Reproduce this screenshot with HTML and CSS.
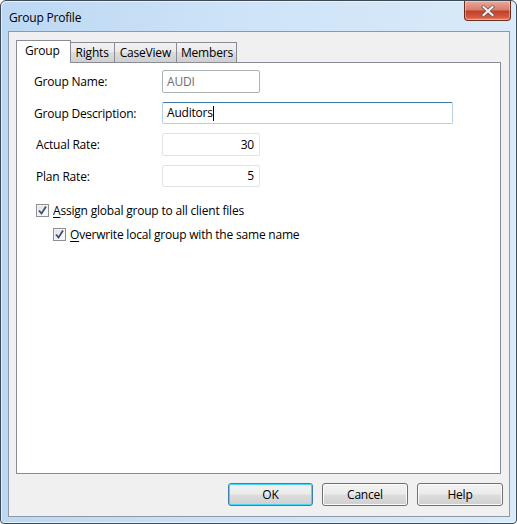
FILE: index.html
```html
<!DOCTYPE html>
<html>
<head>
<meta charset="utf-8">
<link rel="stylesheet" href="styles.css">
</head>
<body>
<div class="window">
  <div class="titlebar">
    <span class="title">Group Profile</span>
    <div class="close">
      <svg width="16" height="12" viewBox="0 0 16 12">
        <path d="M3.5 2 L12.5 10 M12.5 2 L3.5 10" stroke="#6b5a58" stroke-width="3.6" stroke-linecap="square"/>
        <path d="M3.5 2 L12.5 10 M12.5 2 L3.5 10" stroke="#f4f4f4" stroke-width="2" stroke-linecap="square"/>
      </svg>
    </div>
  </div>
  <div class="client">
    <div class="tabs">
      <div class="tab active">Group</div>
      <div class="tab">Rights</div>
      <div class="tab">CaseView</div>
      <div class="tab members">Members</div>
    </div>
    <div class="panel">
      <div class="row r1">
        <span class="label">Group Name:</span>
        <div class="input disabled short">AUDI</div>
      </div>
      <div class="row r2">
        <span class="label">Group Description:</span>
        <div class="input focused long">Auditors<span class="caret"></span></div>
      </div>
      <div class="row r3">
        <span class="label indent">Actual Rate:</span>
        <div class="input light short num">30</div>
      </div>
      <div class="row r4">
        <span class="label indent">Plan Rate:</span>
        <div class="input light short num">5</div>
      </div>
      <div class="check c1">
        <span class="box"><svg width="11" height="11" viewBox="0 0 11 11"><path d="M2 5.5 L4.5 8.5 L9 1.5" fill="none" stroke="#3b4f7a" stroke-width="1.8"/></svg></span>
        <span><u>A</u>ssign global group to all client files</span>
      </div>
      <div class="check c2">
        <span class="box"><svg width="11" height="11" viewBox="0 0 11 11"><path d="M2 5.5 L4.5 8.5 L9 1.5" fill="none" stroke="#3b4f7a" stroke-width="1.8"/></svg></span>
        <span><u>O</u>verwrite local group with the same name</span>
      </div>
    </div>
    <div class="buttons">
      <div class="btn default">OK</div>
      <div class="btn">Cancel</div>
      <div class="btn">Help</div>
    </div>
  </div>
</div>
</body>
</html>
```
FILE: styles.css
```css
* { box-sizing: border-box; }
html, body { margin: 0; padding: 0; }
body {
  width: 517px;
  height: 524px;
  font-family: "Open Sans", "Noto Sans", sans-serif;
  font-size: 12px;
  letter-spacing: -0.2px;
  color: #000;
  background: #fff;
}
.window {
  width: 517px;
  height: 524px;
  border: 1px solid #3f4a57;
  border-radius: 6px 6px 4px 4px;
  background: linear-gradient(90deg, #bcd8f3 0%, #cfe4f8 50%, #d9eaf9 100%);
  padding: 0 6px 6px 7px;
  display: flex;
  flex-direction: column;
  box-shadow: inset 1px 1px 0 #e8f2fc, inset -1px -1px 0 #e8f2fc;
}
.titlebar {
  height: 30px;
  display: flex;
  justify-content: space-between;
  align-items: flex-start;
  flex: none;
}
.title {
  margin-top: 9px;
  margin-left: 1px;
  line-height: 15px;
}
.close {
  width: 47px;
  height: 20px;
  margin-right: -1px;
  border: 1px solid #6a2b22;
  border-top: none;
  border-radius: 0 0 4px 4px;
  background: linear-gradient(180deg, #e9a99c 0%, #d8806f 45%, #c2402a 55%, #d45a3f 85%, #e58b6c 100%);
  display: flex;
  align-items: center;
  justify-content: center;
  box-shadow: inset 0 0 0 1px rgba(255,255,255,0.35);
}
.client {
  flex: 1;
  border: 1px solid #8d99a8;
  background: #f0f0f0;
  padding: 8px 8px 0 7px;
  display: flex;
  flex-direction: column;
}
.tabs {
  display: flex;
  height: 22px;
  align-items: flex-end;
  position: relative;
  z-index: 1;
}
.tab {
  height: 20px;
  padding: 0 5px 0 5px;
  border: 1px solid #898c95;
  border-bottom: none;
  margin-right: -1px;
  background: linear-gradient(180deg, #f2f2f2 0%, #ebebeb 45%, #dddddd 50%, #cfcfcf 100%);
  line-height: 19px;
}
.tab.members { padding: 0 3px 0 4px; }
.tab.active {
  height: 23px;
  margin-bottom: -1px;
  background: #fff;
  padding: 0 10px 0 8px;
  line-height: 20px;
  z-index: 2;
  position: relative;
}
.panel {
  height: 412px;
  width: 485px;
  border: 1px solid #898c95;
  background: #fff;
  padding: 7px 0 0 17px;
  flex: none;
}
.row {
  display: flex;
  align-items: center;
  height: 23px;
}
.r2 { margin-top: 9px; height: 22px; }
.r3 { margin-top: 9px; }
.r4 { margin-top: 9px; height: 22px; }
.label {
  width: 128px;
  flex: none;
}
.label.indent { padding-left: 2px; }
.input {
  height: 100%;
  border: 1px solid #abadb3;
  border-radius: 2px;
  background: #fff;
  padding: 0 4px;
  line-height: 20px;
  display: flex;
  align-items: center;
}
.short { width: 98px; }
.long { width: 291px; }
.disabled { color: #6d6d6d; border-color: #adb2b5; }
.focused {
  border-color: #b5cfe7;
  border-top-color: #3d7bad;
}
.caret {
  display: inline-block;
  width: 1px;
  height: 15px;
  background: #000;
}
.light {
  border-color: #e2e3ea;
  justify-content: flex-end;
  padding-right: 5px;
}
.check {
  display: flex;
  align-items: center;
  height: 16px;
}
.check .box {
  width: 13px;
  height: 13px;
  border: 1px solid #8e8f8f;
  background: linear-gradient(135deg, #dcdcdc 0%, #f4f4f4 60%, #ffffff 100%);
  display: flex;
  align-items: center;
  justify-content: center;
  margin-right: 4px;
  flex: none;
  box-shadow: inset 0 0 0 1px #f4f4f4;
}
.c1 { margin-top: 15px; margin-left: 2px; }
.c2 { margin-top: 8px; margin-left: 19px; }
.buttons {
  display: flex;
  justify-content: flex-end;
  gap: 9px;
  margin-top: 9px;
  margin-right: -2px;
}
.btn {
  width: 86px;
  height: 23px;
  border: 1px solid #707070;
  border-radius: 3px;
  background: linear-gradient(180deg, #f2f2f2 0%, #ebebeb 48%, #dddddd 52%, #cfcfcf 100%);
  display: flex;
  align-items: center;
  justify-content: center;
  box-shadow: inset 0 0 0 1px #fbfbfb;
}
.btn.default {
  width: 85px;
  border-color: #3c7fb1;
  box-shadow: inset 0 0 0 1px #48d7f8;
}
u { text-decoration: underline; text-underline-offset: 2px; }
```
